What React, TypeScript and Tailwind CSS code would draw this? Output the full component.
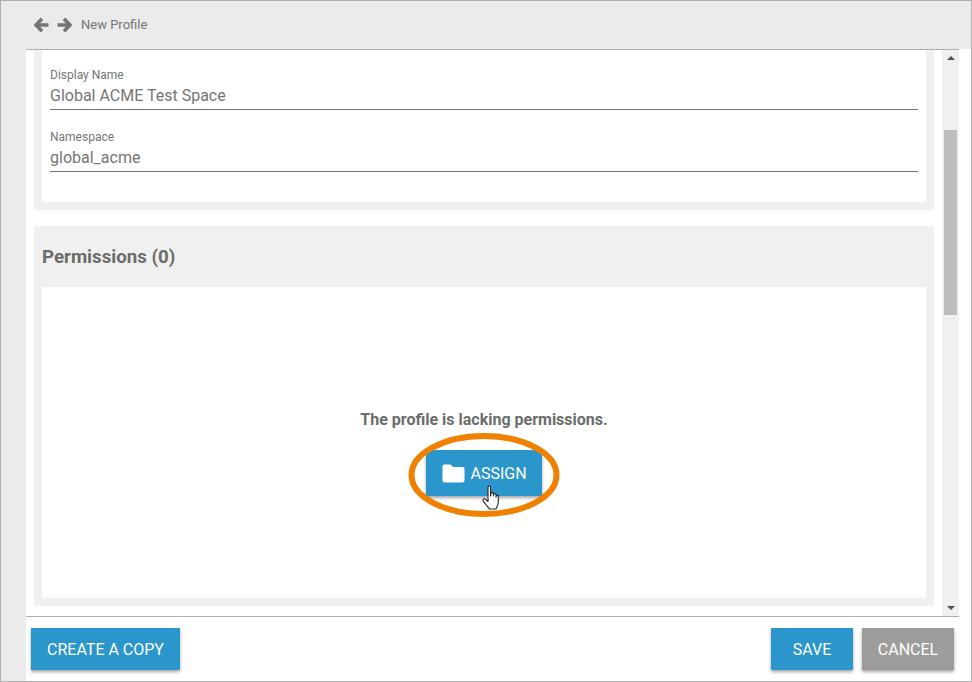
const blueBtn = "bg-[#2a96cc] text-white shadow-[0_2px_3px_rgba(0,0,0,0.35)] flex items-center justify-center text-[16px] h-[42px] pt-[2px]";

function Field({ label, value }: { label: string; value: string }) {
  return (
    <div className="h-[60px] border-b border-[#757575]">
      <div className="text-[12px] leading-[14px] text-[#757575] pt-[18px] box-content">{label}</div>
      <div className="text-[16px] leading-[24px] text-[#757575] mt-[2px]">{value}</div>
    </div>
  );
}

function Arrow({ flip }: { flip?: boolean }) {
  return (
    <svg width="15" height="16" viewBox="0 0 15 16" className={flip ? "scale-x-[-1]" : ""}>
      <path d="M8 1.7 L2 8 L8 14.3 M2.5 8 H14.5" fill="none" stroke="#757575" strokeWidth="3.6" />
    </svg>
  );
}

export default function App() {
  return (
    <div className="w-[972px] h-[682px] border border-[#b0b0b0] bg-white flex flex-col overflow-hidden font-['Roboto',sans-serif]">
      {/* top bar */}
      <div className="h-[48px] shrink-0 bg-[#ebebeb] flex items-center pl-[33px] pb-[1px] gap-[8px]">
        <Arrow />
        <Arrow flip />
        <span className="text-[13px] text-[#757575] ml-[1px]">New Profile</span>
      </div>

      <div className="flex-1 flex min-h-0">
        <div className="w-[25px] shrink-0 bg-[#ebebeb]" />
        <div className="w-[933px] shrink-0 flex flex-col border-t border-[#b0b0b0]">
          <div className="flex h-[566px] shrink-0 border-b border-[#b0b0b0] box-content">
            <div className="w-[916px] shrink-0 px-[8px] flex flex-col">
              {/* namespace card */}
              <div className="bg-[#f0f0f0] px-[8px] pb-[8px] h-[160px] shrink-0">
                <div className="bg-white h-[152px] px-[8px]">
                  <Field label="Display Name" value="Global ACME Test Space" />
                  <div className="mt-[2px]">
                    <Field label="Namespace" value="global_acme" />
                  </div>
                </div>
              </div>

              {/* permissions card */}
              <div className="bg-[#f0f0f0] mt-[16px] px-[8px] pb-[8px] h-[380px] shrink-0 flex flex-col">
                <div className="h-[61px] pt-[2px] shrink-0 flex items-center text-[18.72px] font-bold text-[#6b6d6b]">Permissions (0)</div>
                <div className="bg-white flex-1 flex flex-col items-center pt-[123px]">
                  <div className="text-[16px] leading-[20px] font-bold text-[#6b6d6b]">The profile is lacking permissions.</div>
                  <div className="relative mt-[20px]">
                    <div className={`${blueBtn} w-[116px] h-[46px] gap-[5px] pl-[1px]`}>
                      <svg width="23" height="19" viewBox="0 0 23 19" className="mb-[2px]">
                        <path
                          d="M2.5 .5H8.5L11 3H20.5C21.6 3 22.5 3.9 22.5 5V16.5C22.5 17.6 21.6 18.5 20.5 18.5H2.5C1.4 18.5 .5 17.6 .5 16.5V2.5C.5 1.4 1.4 .5 2.5 .5Z"
                          fill="white"
                        />
                      </svg>
                      <span>ASSIGN</span>
                    </div>
                    <svg width="156" height="90" viewBox="0 0 156 90" className="absolute left-[-20px] top-[-20px] pointer-events-none">
                      <ellipse cx="78" cy="45" rx="72.5" ry="39" fill="none" stroke="#f08000" strokeWidth="6" />
                    </svg>
                    <svg width="20" height="26" viewBox="0 0 20 26" className="absolute left-[56px] top-[35px]">
                      <path
                        d="M6 2.2c0-1.6 2.6-1.6 2.6 0V11l.4-2.6c.2-1.4 2.4-1.3 2.4.2V11l.3-1.6c.3-1.3 2.3-1.1 2.3.4V12l.3-1c.4-1.1 2-.8 2 .5V17c0 3-1.4 5-2.4 7H7.5C6 22 2 17.5 1.2 15.7c-.7-1.6 1-2.8 2.2-1.6L6 16.5Z"
                        fill="white"
                        stroke="#222"
                        strokeWidth="1.1"
                        strokeLinejoin="round"
                      />
                    </svg>
                  </div>
                </div>
              </div>
            </div>

            {/* scrollbar */}
            <div className="w-[17px] shrink-0 bg-[#f0f0f0] flex flex-col items-center py-[6px]">
              <div className="w-0 h-0 border-x-[4px] border-x-transparent border-b-[4px] border-b-[#505050]" />
              <div className="w-[13px] h-[185px] bg-[#bdbdbd] mt-[70px]" />
              <div className="w-0 h-0 mt-auto border-x-[4px] border-x-transparent border-t-[4px] border-t-[#505050]" />
            </div>
          </div>

          {/* footer */}
          <div className="flex-1 flex items-start pt-[11px] pl-[5px]">
            <div className={`${blueBtn} w-[149px]`}>CREATE A COPY</div>
            <div className={`${blueBtn} w-[82px] ml-auto`}>SAVE</div>
            <div className="w-[92px] h-[42px] pt-[2px] ml-[9px] mr-[5px] bg-[#9e9d9b] text-white shadow-[0_2px_3px_rgba(0,0,0,0.35)] flex items-center justify-center text-[16px]">CANCEL</div>
          </div>
        </div>
        <div className="flex-1 bg-white" />
      </div>
    </div>
  );
}
